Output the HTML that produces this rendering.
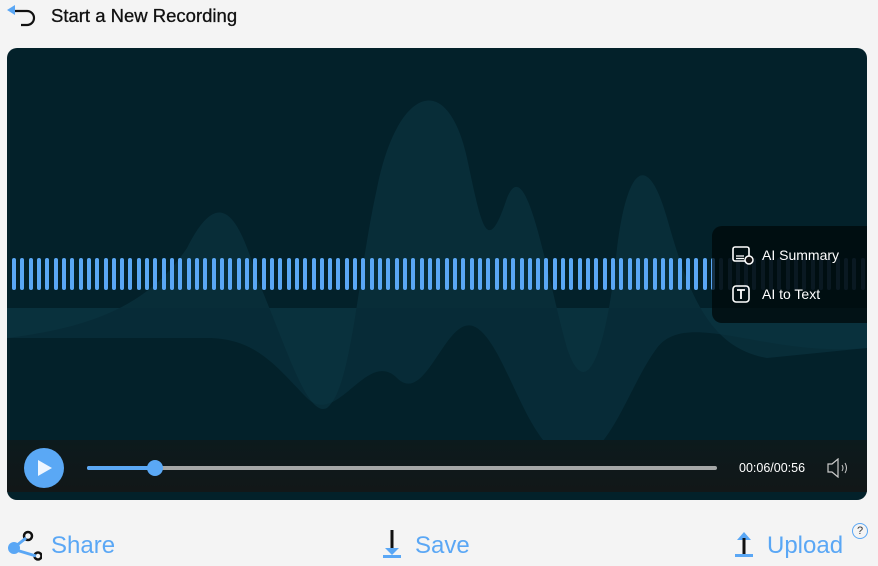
<!DOCTYPE html>
<html><head><meta charset="utf-8"><style>
*{margin:0;padding:0;box-sizing:border-box}
body{width:878px;height:566px;background:#f4f4f4;font-family:"Liberation Sans",sans-serif;position:relative;overflow:hidden}
.title{position:absolute;left:51px;top:5px;font-size:18.5px;color:#111;-webkit-text-stroke:.3px #111}
.card{position:absolute;left:7px;top:48px;width:860px;height:452px;border-radius:10px;overflow:hidden;background:#03212a}
.ctrl{position:absolute;left:0;top:392px;width:860px;height:52px;background:linear-gradient(#0c1a1d,#121718)}
.panel{position:absolute;left:705px;top:178px;width:160px;height:97px;background:rgba(0,8,10,.75);border-radius:10px 0 0 10px}
.panel div{position:absolute;left:50px;color:#fff;font-size:14px}
.btm{position:absolute;top:532px;font-size:24px;color:#5aa7f5}
</style></head><body>
<svg style="position:absolute;left:7px;top:5px" width="32" height="22" viewBox="0 0 32 22"><path d="M6 6 H20 a7 7 0 0 1 0 14 H14" fill="none" stroke="#111" stroke-width="2.2"/><path d="M0 5 L8 0 L8 10Z" fill="#5aa7f5"/></svg>
<div class="title">Start a New Recording</div>
<div class="card">
<svg width="860" height="452" style="position:absolute;left:0;top:0">
<path d="M0 290 C80 280 140 260 180 200 C210 140 230 160 250 230 C280 300 300 370 320 360 C345 340 350 230 370 140 C390 40 440 20 460 110 C475 180 480 210 500 150 C520 100 540 230 560 300 C580 360 600 300 610 200 C620 120 640 100 660 170 C680 240 700 300 760 310 L860 300 L860 260 L0 260Z" fill="#0b3542" opacity=".6"/>
<path d="M0 260 L860 260 L860 300 C760 310 680 260 650 300 C620 340 600 420 560 410 C520 400 500 300 470 280 C440 260 420 360 390 330 C360 300 330 380 300 350 C270 320 250 290 200 290 C150 290 80 290 0 290Z" fill="#0b3542" opacity=".55"/>
</svg>
<div id="bars" style="position:absolute;left:5px;top:210px;height:32px;width:860px"></div>
<div class="panel">
<svg style="position:absolute;left:20px;top:20px" width="22" height="20" viewBox="0 0 22 20"><rect x="1" y="1" width="16" height="14" rx="2" fill="none" stroke="#fff" stroke-width="1.6"/><path d="M4 10h8M4 12.5h8" stroke="#fff" stroke-width="1.3"/><circle cx="17" cy="14" r="4" fill="#111" stroke="#fff" stroke-width="1.5"/></svg>
<div style="top:21px">AI Summary</div>
<svg style="position:absolute;left:20px;top:59px" width="18" height="18" viewBox="0 0 18 18"><rect x="1" y="1" width="16" height="16" rx="3" fill="none" stroke="#fff" stroke-width="1.6"/><path d="M5 5h8M9 5v9" stroke="#fff" stroke-width="1.8"/></svg>
<div style="top:60px">AI to Text</div>
</div>
<div class="ctrl">
<div style="position:absolute;left:17px;top:8px;width:40px;height:40px;border-radius:50%;background:#5aa8f5"></div>
<svg style="position:absolute;left:29px;top:18px" width="18" height="20"><path d="M2 2 L16 10 L2 18Z" fill="#eef6ff"/></svg>
<div style="position:absolute;left:80px;top:26px;width:630px;height:4px;border-radius:2px;background:#a5a7a7"></div>
<div style="position:absolute;left:80px;top:26px;width:68px;height:4px;border-radius:2px;background:#5aa8f5"></div>
<div style="position:absolute;left:140px;top:20px;width:16px;height:16px;border-radius:50%;background:#5aa8f5"></div>
<div style="position:absolute;left:732px;top:21px;color:#fff;font-size:12.5px">00:06/00:56</div>
<svg style="position:absolute;left:819px;top:18px" width="26" height="20"><path d="M2 6h4l6-5v18l-6-5H2Z" fill="none" stroke="#ccc" stroke-width="1.2"/><path d="M16 7q2 3 0 6M19 5q3 5 0 10" fill="none" stroke="#ccc" stroke-width="1"/></svg>
</div>
</div>
<svg style="position:absolute;left:6px;top:528px" width="36" height="34"><circle cx="22" cy="8" r="4" fill="none" stroke="#111" stroke-width="2.5"/><circle cx="32" cy="28" r="3.5" fill="none" stroke="#111" stroke-width="2.5"/><circle cx="8" cy="20" r="6" fill="#5aa7f5"/><path d="M10 18 L20 10 M10 22 L30 28" stroke="#5aa7f5" stroke-width="3"/></svg>
<div class="btm" style="left:51px">Share</div>
<svg style="position:absolute;left:380px;top:530px" width="24" height="30"><path d="M12 0v20" stroke="#111" stroke-width="3"/><path d="M5 18h14l-7 7Z" fill="#5aa7f5"/><rect x="3" y="25" width="18" height="3" fill="#5aa7f5"/></svg>
<div class="btm" style="left:415px">Save</div>
<svg style="position:absolute;left:732px;top:532px" width="24" height="28"><path d="M12 0l7 8H5Z" fill="#5aa7f5"/><path d="M12 6v16" stroke="#111" stroke-width="3"/><rect x="3" y="22" width="18" height="3" fill="#5aa7f5"/></svg>
<div class="btm" style="left:767px">Upload</div>
<div style="position:absolute;left:852px;top:523px;width:16px;height:16px;border:1.3px solid #5aa7f5;border-radius:50%;font-size:11px;color:#333;text-align:center;line-height:14px">?</div>
<script>
var b=document.getElementById('bars'),h='';
for(var i=0;i<103;i++){var x=i*8.32;if(x>850)break;h+='<div style="position:absolute;left:'+x+'px;top:0;width:4px;height:32px;border-radius:2px;background:'+(x<700?'#5aa7f5':'#2a4d6e')+'"></div>';}
b.innerHTML=h;
</script>
</body></html>
